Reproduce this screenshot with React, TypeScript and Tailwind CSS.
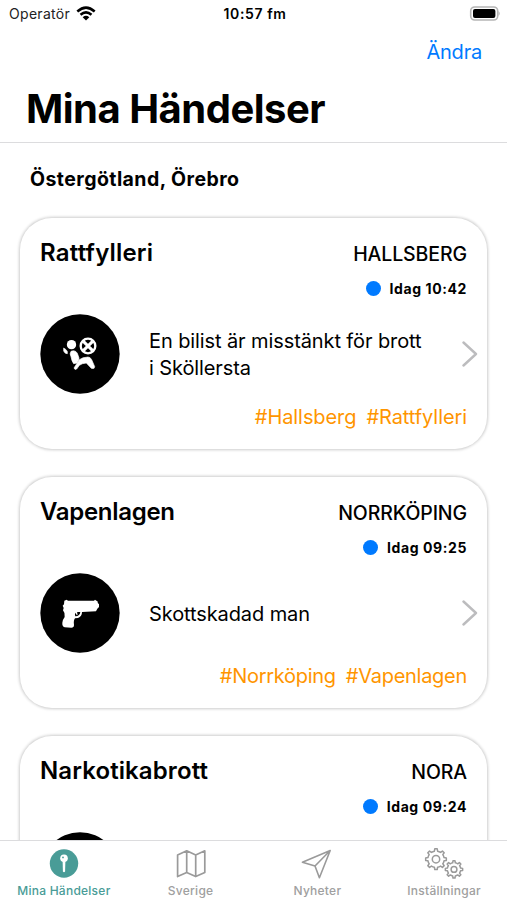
import type { ReactNode } from "react";

function AirbagIcon() {
  return (
    <svg viewBox="0 0 240 240" className="size-20 shrink-0" fill="#fff">
      <circle cx="120" cy="120" r="119" fill="#000" />
      <circle cx="94.5" cy="92" r="14" />
      <path d="M71 102 L78 107 Q84 112 82 119 Q75 120 71 111 Z" stroke="#fff" strokeWidth="2" />
      <path d="M93 112 Q106 107 112 118 L117 132 Q118 138 111 147 L101 149 Q95 141 93 128 Q88 119 93 112 Z" stroke="#fff" strokeWidth="2" />
      <path d="M102 162 L118 137 Q127 130 144 129 Q151 129 155 137 L164 158 Q164 166 154 163 L139 147 Q125 148 118 154 L110 165 Q104 169 102 162 Z" stroke="#fff" strokeWidth="2" />
      <circle cx="144" cy="96" r="22" fill="none" stroke="#fff" strokeWidth="7" />
      <circle cx="144" cy="96" r="6" />
      <path d="M130 82 L158 110 M158 82 L130 110" stroke="#fff" strokeWidth="9" />
    </svg>
  );
}

function GunIcon() {
  return (
    <svg viewBox="0 0 240 240" className="size-20 shrink-0">
      <circle cx="120" cy="120" r="119" fill="#000" />
      <path
        fill="#fff"
        d="M73 83 L80 80 L84 83 L162 83 L165 80 L169 83 L172 84 Q173 92 177 94 L177 102 L172 107 L168 115 L126 117 Q126 131 114 135 L105 136 Q100 142 102 156 Q102 164 94 164 L74 163 Q66 160 67 149 Q68 140 74 132 Q76 120 69 112 L71 105 L68 98 L72 94 Z"
      />
      <path d="M106 130 Q102 120 112 117 L121 117 Q120 129 106 130 Z" fill="#000" />
      <path d="M110 117 Q108 122 112 125" fill="none" stroke="#fff" strokeWidth="4" />
    </svg>
  );
}

function gearPath(cx: number, cy: number, outer: number, inner: number, teeth: number) {
  const step = (Math.PI * 2) / teeth;
  const at = (a: number, r: number) =>
    `${(cx + Math.sin(a) * r).toFixed(2)} ${(cy - Math.cos(a) * r).toFixed(2)}`;
  let d = "";
  for (let i = 0; i < teeth; i++) {
    const a = i * step;
    d += `${i === 0 ? "M" : "L"}${at(a - step * 0.25, inner)} L${at(a - step * 0.15, outer)} L${at(a + step * 0.15, outer)} L${at(a + step * 0.25, inner)} A${inner} ${inner} 0 0 1 ${at(a + step * 0.75, inner)} `;
  }
  return d + "Z";
}

function Gears() {
  return (
    <svg viewBox="0 0 40 32" className="h-8 w-10" fill="none" stroke="#9a9a9a" strokeWidth="1.5" strokeLinejoin="round">
      <path d={gearPath(12, 12.2, 10.4, 8.2, 8)} />
      <circle cx="12" cy="12.2" r="3.7" />
      <path d={gearPath(30, 22.4, 8.7, 6.7, 8)} />
      <circle cx="30" cy="22.4" r="2.9" />
    </svg>
  );
}

function Pin() {
  return (
    <svg viewBox="0 0 40 32" className="h-8 w-10">
      <circle cx="20" cy="16.5" r="14.2" fill="#499c97" />
      <circle cx="20" cy="11.3" r="3.8" fill="#fff" />
      <path d="M18.6 13 H21.4 L21.1 24.5 Q20 26 18.9 24.5 Z" fill="#fff" />
      <circle cx="19" cy="10.4" r="0.9" fill="#499c97" />
    </svg>
  );
}

function MapIcon() {
  return (
    <svg viewBox="0 0 40 32" className="h-8 w-10" fill="none" stroke="#9a9a9a" strokeWidth="1.7" strokeLinejoin="round">
      <path d="M6.6 8 L15.7 3.8 L24.7 8 L33.8 3.8 V25.4 L24.7 29.6 L15.7 25.4 L6.6 29.6 Z M15.7 3.8 V25.4 M24.7 8 V29.6" />
    </svg>
  );
}

function Plane() {
  return (
    <svg viewBox="0 0 40 32" className="h-8 w-10" fill="none" stroke="#9a9a9a" strokeWidth="1.6" strokeLinejoin="round">
      <path d="M33.2 3.5 L5.4 15.3 L18 19 L22.4 30.7 Z M33.2 3.5 L18 19" />
    </svg>
  );
}

type Item = {
  title: string;
  titleClass: string;
  place: string;
  time: string;
  text?: string;
  tags: string[];
  tagsClass?: string;
  icon: ReactNode;
};

const items: Item[] = [
  { title: "Rattfylleri", titleClass: "tracking-[0.2px]", place: "HALLSBERG", time: "Idag 10:42", text: "En bilist är misstänkt för brott i Sköllersta", tags: ["#Hallsberg", "#Rattfylleri"], tagsClass: "tracking-[-0.08px]", icon: <AirbagIcon /> },
  { title: "Vapenlagen", titleClass: "tracking-[-0.3px]", place: "NORRKÖPING", time: "Idag 09:25", text: "Skottskadad man", tags: ["#Norrköping", "#Vapenlagen"], tagsClass: "tracking-[-0.28px]", icon: <GunIcon /> },
  { title: "Narkotikabrott", titleClass: "tracking-[0.1px]", place: "NORA", time: "Idag 09:24", tags: [], icon: <GunIcon /> },
];

function Card({ item }: { item: Item }) {
  return (
    <article className="flex h-[231px] shrink-0 flex-col rounded-[32px] bg-white px-5 pt-5 shadow-[0_0_3px_1px_rgba(0,0,0,0.2)]">
      <div className="flex h-8 items-center justify-between">
        <h2 className={`pb-[3px] text-[24px] font-semibold ${item.titleClass}`}>{item.title}</h2>
        <span className="pt-[2px] text-[19.5px] font-medium tracking-[-0.1px]">{item.place}</span>
      </div>
      <div className="mt-[7px] flex h-[22px] items-center justify-end gap-[9px]">
        <span className="size-[15px] rounded-full bg-[#007aff]" />
        <span className="text-[14px] font-bold tracking-[0.6px]">{item.time}</span>
      </div>
      <div className="mt-[15px] flex h-20 items-center">
        {item.icon}
        <p className="ml-[29px] w-[280px] pt-[2px] text-[20px] leading-[27px] tracking-[-0.1px]">{item.text}</p>
        <svg viewBox="0 0 16 26" className="-mr-[11px] ml-auto h-[26px] w-4 shrink-0" fill="none" stroke="#bcbcbe" strokeWidth="2.4" strokeLinecap="round" strokeLinejoin="round">
          <path d="M1.5 1.5 L14 13 L1.5 24.5" />
        </svg>
      </div>
      <div className={`mt-2 flex h-[30px] items-center justify-end gap-[10px] text-[20px] text-[#ff9500] ${item.tagsClass ?? ""}`}>
        {item.tags.map((t) => (
          <span key={t}>{t}</span>
        ))}
      </div>
    </article>
  );
}

function Tab({ icon, label, active }: { icon: ReactNode; label: string; active?: boolean }) {
  return (
    <div className="flex flex-1 flex-col items-center pl-px pt-[6px]">
      {icon}
      <span className={`mt-[4px] whitespace-nowrap text-[12px] font-medium leading-4 tracking-[0.25px] ${active ? "text-[#499c97]" : "text-[#a0a0a0]"}`}>{label}</span>
    </div>
  );
}

export default function App() {
  return (
    <div className="flex h-[900px] w-[507px] flex-col overflow-hidden bg-white font-['Inter',sans-serif] text-black">
      <header className="h-[143px] shrink-0 border-b border-[#dcdcde]">
        <div className="grid h-[27px] grid-cols-3 items-center pl-[9px] pr-[6px]">
          <div className="flex items-center gap-[6px]">
            <span className="text-[14px] tracking-[0.3px] text-[#222]">Operatör</span>
            <svg viewBox="0 0 20 15" className="h-[15px] w-5" fill="none" stroke="#000" strokeWidth="2.5">
              <path d="M1.3 5.5 Q10 -2.3 18.7 5.5 M4.5 8.8 Q10 4 15.5 8.8" />
              <path d="M6.7 11.2 Q10 8.3 13.3 11.2 L10 14.5 Z" fill="#000" stroke="none" />
            </svg>
          </div>
          <span className="text-center text-[14px] font-semibold tracking-[0.6px]">10:57 fm</span>
          <svg viewBox="0 0 32 15" className="h-[15px] w-8 justify-self-end">
            <rect x="1.7" y="1" width="27" height="13" rx="4" fill="#fff" stroke="#b5b5b5" strokeWidth="1.6" />
            <rect x="4" y="3" width="22.4" height="9" rx="2" fill="#000" />
            <path d="M29.5 5 Q32 7.5 29.5 10 Z" fill="#b5b5b5" />
          </svg>
        </div>
        <div className="flex h-[49px] items-center justify-end pr-[25px] text-[20px] tracking-[-0.2px] text-[#007aff]">Ändra</div>
        <h1 className="pl-[26px] text-[40px] font-bold leading-[66px] tracking-[-0.5px]">Mina Händelser</h1>
      </header>
      <main className="flex min-h-0 flex-1 flex-col overflow-hidden px-5">
        <p className="h-[75px] shrink-0 pl-[10px] pt-[22px] text-[19.5px] font-bold leading-7 tracking-[0.43px]">Östergötland, Örebro</p>
        <div className="flex flex-col gap-7">
          {items.map((item) => (
            <Card key={item.title} item={item} />
          ))}
        </div>
      </main>
      <nav className="flex h-[60px] shrink-0 border-t border-[#dcdcde] bg-white">
        <Tab icon={<Pin />} label="Mina Händelser" active />
        <Tab icon={<MapIcon />} label="Sverige" />
        <Tab icon={<Plane />} label="Nyheter" />
        <Tab icon={<Gears />} label="Inställningar" />
      </nav>
    </div>
  );
}
